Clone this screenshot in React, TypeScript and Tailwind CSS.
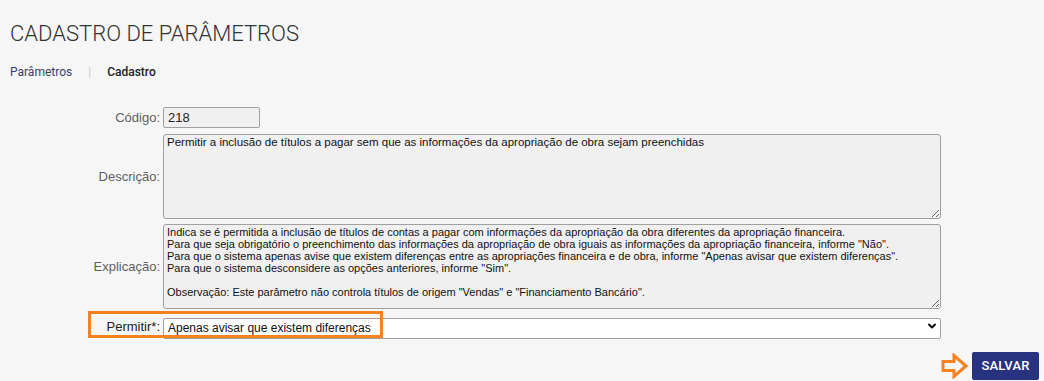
import { ChevronDown } from 'lucide-react'

const DESCRICAO =
  'Permitir a inclusão de títulos a pagar sem que as informações da apropriação de obra sejam preenchidas'

const EXPLICACAO = [
  'Indica se é permitida a inclusão de títulos de contas a pagar com informações da apropriação da obra diferentes da apropriação financeira.',
  'Para que seja obrigatório o preenchimento das informações da apropriação de obra iguais as informações da apropriação financeira, informe "Não".',
  'Para que o sistema apenas avise que existem diferenças entre as apropriações financeira e de obra, informe "Apenas avisar que existem diferenças".',
  'Para que o sistema desconsidere as opções anteriores, informe "Sim".',
  '',
  'Observação: Este parâmetro não controla títulos de origem "Vendas" e "Financiamento Bancário".',
].join('\n')

function Label({ children, strong }: { children: React.ReactNode; strong?: boolean }) {
  return (
    <label
      className={`w-[153px] shrink-0 text-right pr-[3px] text-[13px] ${strong ? 'text-[#222]' : 'text-[#5f5f5f]'}`}
    >
      {children}
    </label>
  )
}

export default function App() {
  return (
    <div
      className="relative min-h-[381px] bg-[#f6f6f6] text-[#333]"
      style={{ fontFamily: 'Roboto, "Liberation Sans", Arial, sans-serif' }}
    >
      <div className="px-[10px] pt-[21px]">
        <h1 className="text-[22px] leading-[26px] font-light text-[#333]">
          CADASTRO DE PARÂMETROS
        </h1>
        <nav className="mt-[16px] flex items-center text-[12px] leading-[18px]">
          <span className="text-[#3b3f6b]">Parâmetros</span>
          <span className="mx-[16px] text-[#ccc]">|</span>
          <span className="font-medium text-[#222]">Cadastro</span>
        </nav>
      </div>

      <form className="mt-[26px] pl-[10px]" style={{ fontFamily: '"Liberation Sans", Arial, sans-serif' }}>
        <div className="flex items-center">
          <Label>Código:</Label>
          <input
            readOnly
            value="218"
            className="w-[97px] h-[21px] px-[4px] border border-[#a0a0a0] rounded-[2px] bg-[#f0f0f0] text-[13px] text-[#222] outline-none"
          />
        </div>

        <div className="flex items-center mt-[6px]">
          <Label>Descrição:</Label>
          <textarea
            readOnly
            value={DESCRICAO}
            className="w-[778px] h-[85px] px-[3px] py-[1px] border border-[#a0a0a0] rounded-[3px] bg-[#f0f0f0] text-[11.5px] leading-[12px] text-[#111] outline-none"
          />
        </div>

        <div className="flex items-center mt-[5px]">
          <Label>Explicação:</Label>
          <textarea
            readOnly
            value={EXPLICACAO}
            className="w-[778px] h-[85px] px-[3px] py-[1px] border border-[#a0a0a0] rounded-[3px] bg-[#f0f0f0] text-[11px] leading-[12px] text-[#111] outline-none"
          />
        </div>

        <div className="flex items-center mt-[6px]">
          <Label strong>Permitir*:</Label>
          <div className="relative w-[778px]">
            <select
              defaultValue="avisar"
              className="w-full h-[21px] appearance-none pl-[4px] border border-[#a0a0a0] rounded-[2px] bg-white text-[12px] text-[#111] outline-none"
            >
              <option value="nao">Não</option>
              <option value="avisar">Apenas avisar que existem diferenças</option>
              <option value="sim">Sim</option>
            </select>
            <ChevronDown
              size={12}
              strokeWidth={4}
              className="pointer-events-none absolute right-[3px] top-[5px] text-[#111]"
            />
          </div>
        </div>

        <div className="flex justify-end items-center mt-[13px] pr-[5px]">
          <svg width="28" height="26" viewBox="0 0 28 26" className="mr-[3px]">
            <polygon
              points="2,8.5 13,8.5 13,2.5 25,13 13,23.5 13,17.5 2,17.5"
              fill="none"
              stroke="#f58220"
              strokeWidth="3"
              strokeLinejoin="miter"
            />
          </svg>
          <button
            type="button"
            className="w-[67px] h-[28px] rounded-[2px] bg-[#27337f] text-white text-[13px] font-medium tracking-[0.2px]"
            style={{ fontFamily: 'Roboto, "Liberation Sans", sans-serif' }}
          >
            SALVAR
          </button>
        </div>
      </form>

      {/* highlight around the Permitir field */}
      <div className="pointer-events-none absolute left-[88px] top-[311px] w-[295px] h-[27px] border-[3px] border-[#f58220]" />
    </div>
  )
}
